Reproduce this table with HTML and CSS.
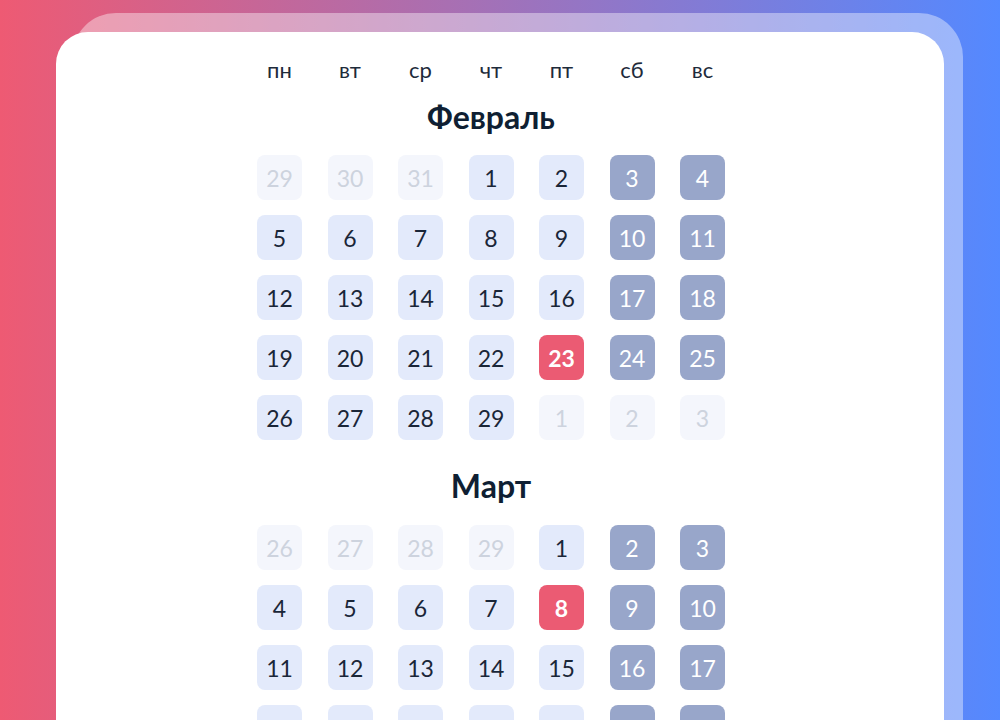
FILE: index.html
```html
<!DOCTYPE html>
<html lang="ru">
<head>
  <meta charset="UTF-8" />
  <meta name="viewport" content="width=device-width, initial-scale=1.0"/>
  <title>Календарь</title>
  <link rel="stylesheet" href="styles.css">
</head>
<body>
  <div class="card">
    <div class="weekdays">
      <span>пн</span><span>вт</span><span>ср</span><span>чт</span><span>пт</span><span>сб</span><span>вс</span>
    </div>

    <div class="month">
      <div class="month-title">Февраль</div>
      <div class="days">
        <div class="day muted">29</div><div class="day muted">30</div><div class="day muted">31</div><div class="day">1</div><div class="day">2</div><div class="day weekend">3</div><div class="day weekend">4</div>
        <div class="day">5</div><div class="day">6</div><div class="day">7</div><div class="day">8</div><div class="day">9</div><div class="day weekend">10</div><div class="day weekend">11</div>
        <div class="day">12</div><div class="day">13</div><div class="day">14</div><div class="day">15</div><div class="day">16</div><div class="day weekend">17</div><div class="day weekend">18</div>
        <div class="day">19</div><div class="day">20</div><div class="day">21</div><div class="day">22</div><div class="day holiday">23</div><div class="day weekend">24</div><div class="day weekend">25</div>
        <div class="day">26</div><div class="day">27</div><div class="day">28</div><div class="day">29</div><div class="day muted">1</div><div class="day muted">2</div><div class="day muted">3</div>
      </div>
    </div>

    <div class="month">
      <div class="month-title">Март</div>
      <div class="days">
        <div class="day muted">26</div><div class="day muted">27</div><div class="day muted">28</div><div class="day muted">29</div><div class="day">1</div><div class="day weekend">2</div><div class="day weekend">3</div>
        <div class="day">4</div><div class="day">5</div><div class="day">6</div><div class="day">7</div><div class="day holiday">8</div><div class="day weekend">9</div><div class="day weekend">10</div>
        <div class="day">11</div><div class="day">12</div><div class="day">13</div><div class="day">14</div><div class="day">15</div><div class="day weekend">16</div><div class="day weekend">17</div>
        <div class="day">18</div><div class="day">19</div><div class="day">20</div><div class="day">21</div><div class="day">22</div><div class="day weekend">23</div><div class="day weekend">24</div>
        <div class="day">25</div><div class="day">26</div><div class="day">27</div><div class="day">28</div><div class="day">29</div><div class="day weekend">30</div><div class="day weekend">31</div>
      </div>
    </div>
  </div>
</body>
</html>
```

FILE: styles.css
```css
html, body {
  height: 720px;
  overflow: hidden;
}

body {
  margin: 0;
  font-family: 'Lato', 'Noto Sans', sans-serif;
  background: linear-gradient(90deg, #EE5A73 0%, #5489FF 100%);
  color: #1A2638;
}

.card {
  position: relative;
  margin: 32px 56px 0;
  min-height: 900px;
  padding: 26px 0 0 201px;
  background-color: #fff;
  border-radius: 32px;
}

/* второй лист под карточкой */
.card::before {
  content: '';
  position: absolute;
  top: -19px;
  left: 16px;
  right: -19px;
  bottom: 0;
  background-color: rgba(255, 255, 255, 0.4);
  border-radius: 44px;
  z-index: -1;
}

.weekdays,
.days {
  display: grid;
  grid-template-columns: repeat(7, 45px);
  column-gap: 25.5px;
  width: 468px;
}

.weekdays span {
  text-align: center;
  font-size: 22px;
  line-height: 24px;
  color: #1E2B3B;
}

.month-title {
  width: 468px;
  text-align: center;
  font-size: 32px;
  font-weight: bold;
  line-height: 36px;
  color: #0F1F33;
  margin: 17px 0 20px;
}

.month + .month .month-title {
  margin-top: 28px;
  margin-bottom: 21px;
}

.days {
  row-gap: 15px;
}

.day {
  height: 45px;
  display: flex;
  align-items: center;
  justify-content: center;
  border-radius: 8px;
  background-color: #E3EAFB;
  font-size: 23px;
  color: #1A2638;
}

.day.weekend {
  background-color: #98A6CA;
  color: #fff;
}

.day.holiday {
  background-color: #EB5B73;
  color: #fff;
  font-weight: bold;
}

.day.muted {
  background-color: #F4F6FC;
  color: #CDD3DE;
}
```
